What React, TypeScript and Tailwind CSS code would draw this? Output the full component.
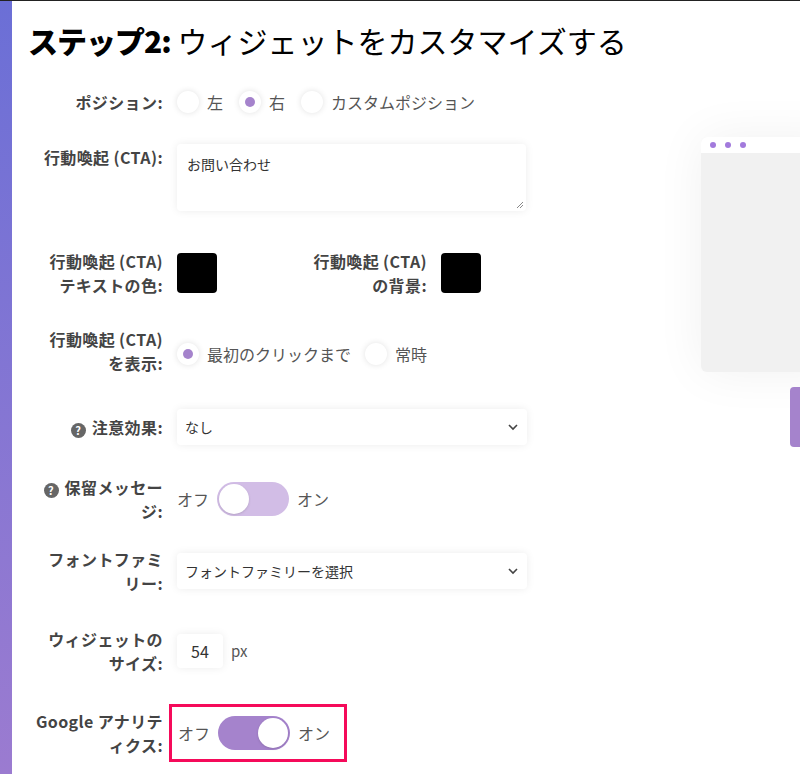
import React from "react";

const F = { fontFamily: '"Noto Sans CJK JP", "Noto Sans", sans-serif' };

function Label({ children, h = "" }: { children: React.ReactNode; h?: string }) {
  return (
    <div className={`w-[139px] shrink-0 text-right text-[16px] font-bold leading-[24px] tracking-[0.4px] text-[#444] ${h}`}>{children}</div>
  );
}

function Radio({ on }: { on?: boolean }) {
  return (
    <span className="flex h-[22px] w-[22px] items-center justify-center rounded-full bg-white shadow-[0_0_6px_rgba(0,0,0,0.12)]">
      {on && <span className="h-[10px] w-[10px] rounded-full bg-[#a583cc]" />}
    </span>
  );
}

function Q() {
  return (
    <span className="mr-[6px] inline-flex h-[15px] w-[15px] items-center justify-center rounded-full bg-[#666] align-[-1px] text-[11px] font-bold leading-none text-white">?</span>
  );
}

function Toggle({ on }: { on?: boolean }) {
  return (
    <div className="flex items-center gap-[8px] text-[16px] text-[#555]">
      <span>オフ</span>
      <span className={`relative h-[34px] w-[72px] rounded-full ${on ? "bg-[#a583cc]" : "bg-[#d2bde6]"}`}>
        <span className={`absolute top-[2px] h-[30px] w-[30px] rounded-full bg-white shadow ${on ? "right-[2px]" : "left-[2px]"}`} />
      </span>
      <span>オン</span>
    </div>
  );
}

function Select({ text }: { text: string }) {
  return (
    <div className="flex h-[36px] w-[350px] items-center justify-between rounded-[4px] bg-white px-[8px] text-[14px] text-[#333] shadow-[0_0_8px_rgba(0,0,0,0.08)]">
      <span>{text}</span>
      <svg width="12" height="12" viewBox="0 0 12 12"><path d="M2 4l4 4 4-4" stroke="#444" strokeWidth="1.6" fill="none" /></svg>
    </div>
  );
}

export default function App() {
  return (
    <div style={F} className="flex h-[774px] w-[800px] overflow-hidden border-t border-[#222] bg-white">
      <div className="w-[12px] shrink-0 bg-gradient-to-b from-[#6b6fd6] to-[#9b7bd0]" />
      <div className="relative flex-1">
        <h1 className="ml-[16px] mt-[20px] text-[30px] leading-[38px] text-black">
          <span className="font-black tracking-[-1px]">ステップ2:</span> ウィジェットをカスタマイズする
        </h1>
        <div className="ml-[12px] mt-[31px] flex flex-col">
          <div className="flex items-center gap-[14px]">
            <Label>ポジション:</Label>
            <div className="flex items-center gap-[8px] text-[16px] text-[#555]">
              <Radio /><span className="mr-[8px]">左</span>
              <Radio on /><span className="mr-[8px]">右</span>
              <Radio /><span>カスタムポジション</span>
            </div>
          </div>
          <div className="mt-[30px] flex gap-[14px]">
            <Label h="pt-[1px]">行動喚起 (CTA):</Label>
            <div className="relative h-[67px] w-[349px] rounded-[4px] bg-white px-[10px] py-[10px] text-[14px] text-[#333] shadow-[0_0_8px_rgba(0,0,0,0.08)]">
              お問い合わせ
              <svg className="absolute bottom-[2px] right-[2px]" width="8" height="8" viewBox="0 0 8 8"><path d="M1 7L7 1M4 7L7 4" stroke="#888" /></svg>
            </div>
          </div>
          <div className="mt-[38px] flex items-center gap-[14px]">
            <Label>行動喚起 (CTA)<br />テキストの色:</Label>
            <div className="h-[40px] w-[40px] rounded-[4px] bg-black" />
            <div className="w-[196px] text-right text-[16px] font-bold leading-[24px] tracking-[0.4px] text-[#444]">行動喚起 (CTA)<br />の背景:</div>
            <div className="h-[40px] w-[40px] rounded-[4px] bg-black" />
          </div>
          <div className="mt-[30px] flex items-center gap-[14px]">
            <Label>行動喚起 (CTA)<br />を表示:</Label>
            <div className="mt-[6px] flex items-center gap-[8px] text-[16px] text-[#555]">
              <Radio on /><span className="mr-[6px]">最初のクリックまで</span>
              <Radio /><span>常時</span>
            </div>
          </div>
          <div className="mt-[34px] flex items-center gap-[14px]">
            <Label><Q />注意効果:</Label>
            <Select text="なし" />
          </div>
          <div className="mt-[30px] flex items-center gap-[14px]">
            <Label><Q />保留メッセー<br />ジ:</Label>
            <Toggle />
          </div>
          <div className="mt-[24px] flex items-center gap-[14px]">
            <Label>フォントファミ<br />リー:</Label>
            <Select text="フォントファミリーを選択" />
          </div>
          <div className="mt-[32px] flex items-center gap-[14px]">
            <Label>ウィジェットの<br />サイズ:</Label>
            <div className="flex items-center gap-[8px]">
              <div className="flex h-[34px] w-[46px] items-center justify-center rounded-[4px] bg-white text-[16px] text-[#333] shadow-[0_0_8px_rgba(0,0,0,0.08)]">54</div>
              <span className="text-[15px] text-[#555]">px</span>
            </div>
          </div>
          <div className="mt-[29px] flex items-center gap-[6px]">
            <Label>Google アナリテ<br />ィクス:</Label>
            <div className="flex h-[58px] w-[178px] items-center border-[3px] border-[#f50a5a] px-[6px]">
              <Toggle on />
            </div>
          </div>
        </div>
        <div className="absolute left-[689px] top-[136px] h-[235px] w-[140px] overflow-hidden rounded-[6px] bg-[#f1f1f1] shadow-[0_0_50px_rgba(0,0,0,0.06)]">
          <div className="flex h-[16px] items-center gap-[9px] bg-white px-[9px]">
            <span className="h-[6px] w-[6px] rounded-full bg-[#a27adc]" />
            <span className="h-[6px] w-[6px] rounded-full bg-[#a27adc]" />
            <span className="h-[6px] w-[6px] rounded-full bg-[#a27adc]" />
          </div>
        </div>
        <div className="absolute left-[778px] top-[386px] h-[60px] w-[30px] rounded-[4px] bg-[#a583cc]" />
      </div>
    </div>
  );
}
